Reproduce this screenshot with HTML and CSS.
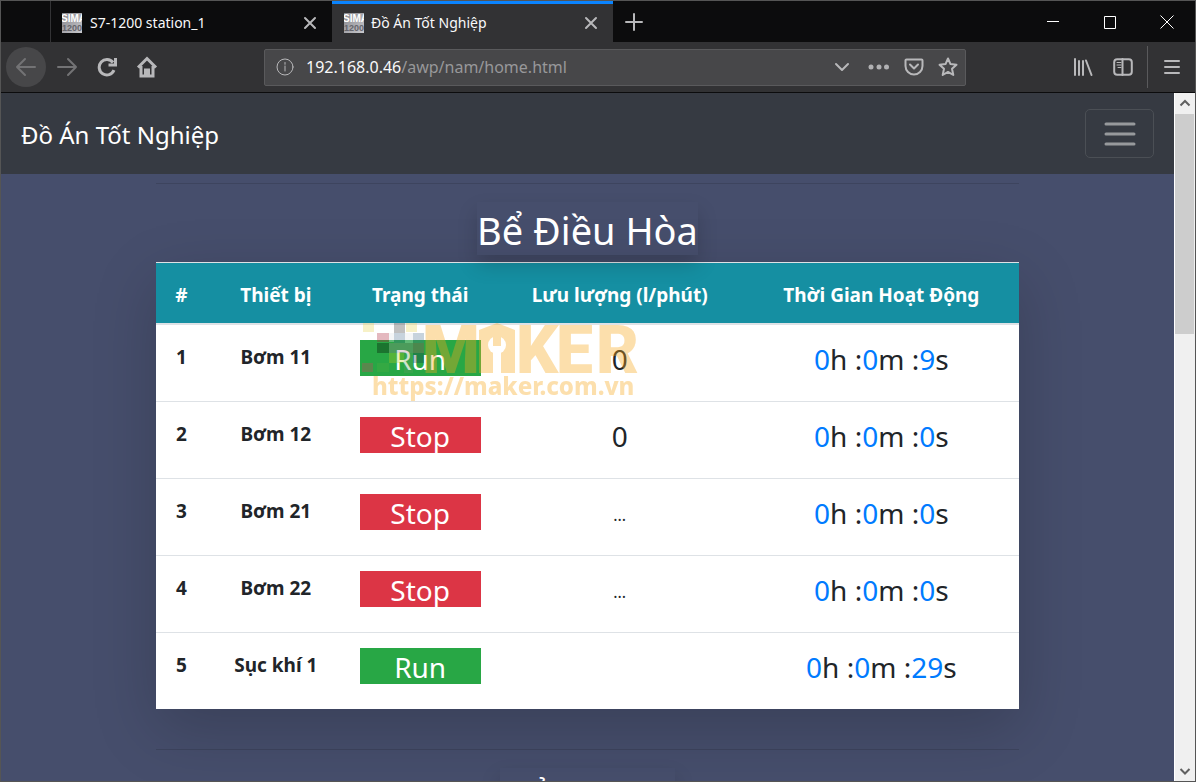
FILE: index.html
```html
<!DOCTYPE html>
<html lang="vi">
<head>
<meta charset="utf-8">
<title>Đồ Án Tốt Nghiệp</title>
<link rel="stylesheet" href="styles.css">
</head>
<body>
<svg class="defs" aria-hidden="true">
  <defs>
    <linearGradient id="metal" x1="0" y1="0" x2="1" y2="1">
      <stop offset="0" stop-color="#85858b"/><stop offset="1" stop-color="#c9c9cd"/>
    </linearGradient>
    <symbol id="favicon" viewBox="0 0 20 20">
      <rect width="20" height="20" fill="url(#metal)"/>
      <text x="-1" y="9" class="fav-top">SIMA</text>
      <text x="0" y="18" class="fav-bottom">1200</text>
    </symbol>
    <symbol id="cross" viewBox="0 0 14 14"><path d="M2 2l10 10M12 2L2 12"/></symbol>
  </defs>
</svg>
<div class="window">
  <header class="titlebar">
    <div class="tab">
      <svg class="favicon"><use href="#favicon"/></svg>
      <span class="tab-title">S7-1200 station_1</span>
      <button class="tab-close" aria-label="Close tab"><svg class="ico" width="14" height="14"><use href="#cross"/></svg></button>
    </div>
    <div class="tab tab-active">
      <svg class="favicon"><use href="#favicon"/></svg>
      <span class="tab-title">Đồ Án Tốt Nghiệp</span>
      <button class="tab-close" aria-label="Close tab"><svg class="ico" width="14" height="14"><use href="#cross"/></svg></button>
    </div>
    <button class="new-tab" aria-label="New tab"><svg class="ico" width="18" height="18" viewBox="0 0 18 18"><path d="M9 1v16M1 9h16"/></svg></button>
    <div class="caption">
      <button aria-label="Minimize"><svg class="thin" width="14" height="14" viewBox="0 0 14 14"><path d="M1 6.500h12"/></svg></button>
      <button aria-label="Maximize"><svg class="thin" width="14" height="14" viewBox="0 0 14 14"><path d="M1.500 1.500h11v12h-11z"/></svg></button>
      <button aria-label="Close"><svg class="thin" width="14" height="14" viewBox="0 0 14 14"><path d="M.5.500l13 13M13.500.500l-13 13"/></svg></button>
    </div>
  </header>

  <div class="toolbar">
    <button class="nav back" aria-label="Back"><svg class="ico" width="22" height="20" viewBox="0 0 22 20"><path d="M20 10H2M10 2l-8 8 8 8"/></svg></button>
    <button class="nav dim" aria-label="Forward"><svg class="ico" width="22" height="20" viewBox="0 0 22 20"><path d="M2 10h18M12 2l8 8-8 8"/></svg></button>
    <button class="nav" aria-label="Reload"><svg class="ico mid" width="20" height="20" viewBox="0 0 20 20"><path d="M17 13.200A7.700 7.700 0 1 1 16 5.500"/><path d="M18.500 1v7h-7"/></svg></button>
    <button class="nav" aria-label="Home"><svg class="ico mid" width="22" height="22" viewBox="0 0 22 22"><path d="M2 11.500L11 2.500l9 9M5 10v10h12V10"/><path d="M9.500 20v-6h3v6"/></svg></button>
    <div class="urlbar">
      <svg class="ico info" width="18" height="18" viewBox="0 0 18 18"><circle cx="9" cy="9" r="8"/><path d="M9 8v5M9 4.500v1.800"/></svg>
      <div class="url" role="textbox" aria-label="Address"><span class="host">192.168.0.46</span>/awp/nam/home.html</div>
      <button aria-label="History"><svg class="ico" width="20" height="12" viewBox="0 0 20 12"><path d="M2 3l6 6 6-6"/></svg></button>
      <button aria-label="Page actions"><svg width="22" height="6" viewBox="0 0 22 6" fill="#b1b1b3"><circle cx="3" cy="3" r="2.500"/><circle cx="11" cy="3" r="2.500"/><circle cx="18.500" cy="3" r="2.500"/></svg></button>
      <button aria-label="Save to Pocket"><svg class="ico" width="20" height="18" viewBox="0 0 20 18"><path d="M2.500 1.500h15a1 1 0 0 1 1 1V8a8.500 8.500 0 0 1-17 0V2.500a1 1 0 0 1 1-1z"/><path d="M6 6.500l4 4 4-4"/></svg></button>
      <button aria-label="Bookmark"><svg class="ico" width="20" height="20" viewBox="0 0 20 20"><path d="M10 1.500l2.500 5.600 6 .7-4.500 4 1.300 6.200-5.300-3.100L4.700 18 6 11.800l-4.500-4 6-.7z"/></svg></button>
    </div>
    <div class="tools">
      <button aria-label="Library"><svg class="ico" width="20" height="18" viewBox="0 0 20 18"><path d="M2 1v16M6 3v14M10 3v14M13 2.500l5.500 14.500"/></svg></button>
      <button aria-label="Sidebars"><svg class="ico" width="20" height="18" viewBox="0 0 20 18"><rect x="1.200" y="1.200" width="17.600" height="15.600" rx="3"/><path d="M9.500 1v16"/><path class="hair" d="M4 4.500h4M4 7h4M5 9.500h3"/></svg></button>
      <button class="menu" aria-label="Menu"><svg class="ico" width="16" height="16" viewBox="0 0 16 16"><path d="M1 2h14M1 8h14M1 14h14"/></svg></button>
    </div>
  </div>

  <div class="viewport">
    <div class="page">
      <nav class="navbar">
        <a class="brand" href="#">Đồ Án Tốt Nghiệp</a>
        <button class="toggler" aria-label="Toggle navigation"><svg width="38" height="38" viewBox="0 0 38 38"><path d="M5 9h28M5 19h28M5 29h28"/></svg></button>
      </nav>
      <main class="container">
        <hr>
        <section class="tank">
          <h1>Bể Điều Hòa</h1>
          <div class="table-wrap">
            <table>
              <colgroup><col class="c-no"><col class="c-dev"><col class="c-state"><col class="c-flow"><col class="c-time"></colgroup>
              <thead><tr><th>#</th><th>Thiết bị</th><th>Trạng thái</th><th>Lưu lượng (l/phút)</th><th>Thời Gian Hoạt Động</th></tr></thead>
              <tbody>
                <tr><th>1</th><th>Bơm 11</th><td><p class="state run">Run</p></td><td class="big">0</td><td class="big"><b>0</b>h :<b>0</b>m :<b>9</b>s</td></tr>
                <tr><th>2</th><th>Bơm 12</th><td><p class="state stop">Stop</p></td><td class="big">0</td><td class="big"><b>0</b>h :<b>0</b>m :<b>0</b>s</td></tr>
                <tr><th>3</th><th>Bơm 21</th><td><p class="state stop">Stop</p></td><td class="dots">...</td><td class="big"><b>0</b>h :<b>0</b>m :<b>0</b>s</td></tr>
                <tr><th>4</th><th>Bơm 22</th><td><p class="state stop">Stop</p></td><td class="dots">...</td><td class="big"><b>0</b>h :<b>0</b>m :<b>0</b>s</td></tr>
                <tr><th>5</th><th>Sục khí 1</th><td><p class="state run">Run</p></td><td></td><td class="big"><b>0</b>h :<b>0</b>m :<b>29</b>s</td></tr>
              </tbody>
            </table>
            <svg class="watermark" width="278" height="82" viewBox="0 0 278 82">
              <mask id="wrench">
                <rect width="278" height="82" fill="#fff"/>
                <circle cx="135" cy="23" r="9"/><rect x="131" y="28" width="8" height="24"/>
                <rect x="131" y="12" width="8" height="12" fill="#fff"/>
              </mask>
              <g opacity=".36">
                <g fill="#f7a71c" mask="url(#wrench)">
                  <g class="logo-text"><text x="60" y="51">M</text><text class="small" x="119" y="50">A</text><text x="154" y="51">K</text><text x="194" y="51">E</text><text x="234" y="51">R</text></g>
                  <path d="M117 8l18-7 18 7v43h-14V40h-8v11h-14z"/>
                </g>
                <text class="site" x="10" y="73">https://maker.com.vn</text>
              </g>
              <g opacity=".3">
                <path fill="#e8d24a" d="M1 1h11v9H1zM44 1h11v9H44z"/>
                <path fill="#333" d="M32 1h11v10H32z"/>
                <path fill="#a81830" d="M15 11h12v9H15z"/>
                <path fill="#4a7090" d="M32 11h11v10H32zM51 11h11v10H51z"/>
                <path fill="#dde3e8" d="M27 11h5v9h-5zM43 11h8v10h-8z"/>
                <path fill="#000" d="M15 21h12v10H15z"/>
                <path fill="#a08090" d="M27 21h24v10H27z"/>
                <path fill="#a04060" d="M51 21h11v10H51z"/>
                <path fill="#c0d020" d="M27 31h15v10H27z"/>
                <path fill="#60a060" d="M42 31h9v20h-9z"/>
                <path fill="#103050" d="M51 31h11v10H51z"/>
                <path fill="#d04060" d="M0 41h11v9H0z"/>
                <path fill="#50b040" d="M15 41h12v9H15z"/>
              </g>
            </svg>
          </div>
        </section>
        <hr>
        <section class="tank"><h1>Bể Anoxic</h1></section>
      </main>
    </div>
    <div class="scrollbar" aria-hidden="true">
      <svg width="20" height="20" viewBox="0 0 20 20"><path d="M5.500 12.500L10 8l4.500 4.500"/></svg>
      <div class="thumb"></div>
      <svg width="20" height="20" viewBox="0 0 20 20"><path d="M5.500 8l4.500 4.500L14.500 8"/></svg>
    </div>
  </div>
</div>
</body>
</html>
```
FILE: styles.css
```css
* { box-sizing: border-box; }
body { margin: 0; font-family: "Noto Sans", "Open Sans", sans-serif; }
button { border: 0; padding: 0; margin: 0; background: none; color: inherit; font: inherit; display: flex; align-items: center; justify-content: center; }
svg { display: block; flex: none; }
.defs { position: absolute; width: 0; height: 0; }
.fav-top { font: 700 10px "Liberation Sans", sans-serif; fill: #fff; }
.fav-bottom { font: 700 9px "Liberation Sans", sans-serif; fill: #66666c; }

.window { height: 100vh; display: flex; flex-direction: column; border: 1px solid #555; overflow: hidden; }
.ico { fill: none; stroke: #b8b8ba; stroke-width: 2; stroke-linecap: round; stroke-linejoin: round; }
.ico.mid { stroke-width: 3; stroke-linecap: butt; stroke-linejoin: miter; }
.ico .hair { stroke-width: 1; }
.thin { fill: none; stroke: #fff; stroke-width: 1; }

.titlebar { display: flex; flex: none; height: 41px; padding-left: 49px; background: #0c0c0d; color: #f9f9fa; }
.tab { display: flex; align-items: center; width: 282px; padding: 2px 15px 0 11px; border-left: 1px solid #333335; font-size: 14px; }
.tab-active { width: 281px; padding-left: 12px; background: #323234; box-shadow: inset 0 3px #0a84ff; border: 0; }
.favicon { width: 20px; height: 20px; }
.tab-title { flex: 1; margin-left: 8px; white-space: nowrap; }
.tab-active .tab-title { margin-left: 7px; }
.new-tab { width: 42px; }
.caption { display: flex; margin-left: auto; }
.caption button { width: 57px; }

.toolbar { display: flex; flex: none; align-items: center; height: 51px; padding-left: 5px; background: #323234; border-bottom: 1px solid #0c0c0d; }
.nav { width: 40px; height: 40px; }
.back { margin-right: 1px; border-radius: 50%; background: #474749; }
.back .ico, .dim .ico { stroke: #737375; }
.urlbar { flex: 1; display: flex; align-items: center; gap: 14px; height: 37px; max-width: 702px; margin-left: 97px; padding: 0 7px 0 11px; background: #474749; border: 1px solid #5a5a5c; border-radius: 2px; }
.info { stroke-width: 1; }
.url { flex: 1; margin-left: -2px; font-size: 16px; color: #98989a; white-space: nowrap; }
.host { color: #f9f9fa; }
.tools { display: flex; align-items: center; gap: 20px; margin-left: auto; }
.menu { width: 48px; height: 42px; margin-left: -6px; border-left: 1px solid #5a5a5c; }

.viewport { flex: 1; min-height: 0; display: flex; background: #464e6c; }
.page { flex: 1; overflow: hidden; color: #212529; }
.navbar { display: flex; align-items: center; justify-content: space-between; height: 81px; padding: 0 20px; background: #363a42; }
.brand { padding-top: 2px; color: #fff; font-size: 24px; text-decoration: none; }
.toggler { width: 69px; height: 49px; border: 1px solid #4b4f55; border-radius: 5px; }
.toggler path { stroke: #97999c; stroke-width: 3; stroke-linecap: round; }
.container { max-width: 901px; margin: 0 auto; padding: 9px 19px 0; }
hr { margin: 0 0 18px; border: 0; border-top: 1px solid rgba(0, 0, 0, .12); }
.tank { display: flex; flex-direction: column; align-items: center; }
h1 { position: relative; z-index: 1; margin: 0 0 7px; padding-top: 4px; color: #fff; font-size: 38px; font-weight: 400; line-height: 49px; white-space: nowrap; box-shadow: 0 10px 20px rgba(0, 0, 0, .17); }

.table-wrap { position: relative; width: 100%; margin-bottom: 40px; box-shadow: 0 20px 60px rgba(0, 0, 0, .18); }
table { width: 100%; table-layout: fixed; border-collapse: separate; border-spacing: 0; background: #fff; text-align: center; }
.c-no { width: 51px; }
.c-dev { width: 16%; }
.c-state { width: 151px; }
.c-flow { width: 248px; }
.c-time { width: 32%; }
th, td { height: 77px; padding: 15px; border-top: 1px solid #dee2e6; vertical-align: top; line-height: 30px; font-size: 19px; white-space: nowrap; }
tbody th { padding: 17px 0; }
thead th { height: 63px; padding: 17px 0 13px; background: #158fa2; color: #fff; border-bottom: 2px solid #dee2e6; }
tbody tr:first-child > * { border-top: 0; height: 76px; }
.big { font-size: 28px; line-height: 38px; }
.big b { font-weight: 400; color: #007bff; }
.dots { font-size: 16px; line-height: 42px; }
.state { height: 36px; margin: 0; color: #fff; font-size: 28px; line-height: 38px; }
.run { background: #28a745; }
.stop { background: #dc3545; }

.watermark { position: absolute; left: 206px; top: 60px; pointer-events: none; }
.logo-text { font: 900 66px Roboto, sans-serif; }
.logo-text .small { font-size: 46px; }
.site { font: 800 24px "Noto Sans", sans-serif; fill: #f7a71c; }

.scrollbar { display: flex; flex-direction: column; justify-content: flex-start; width: 21px; background: #f0f0f0; border-left: 1px solid #fff; }
.scrollbar path { fill: none; stroke: #606060; stroke-width: 2; }
.scrollbar svg:last-child { margin-top: auto; }
.thumb { height: 32%; margin: 1px 1px 0 0; background: #cdcdcd; }
```
